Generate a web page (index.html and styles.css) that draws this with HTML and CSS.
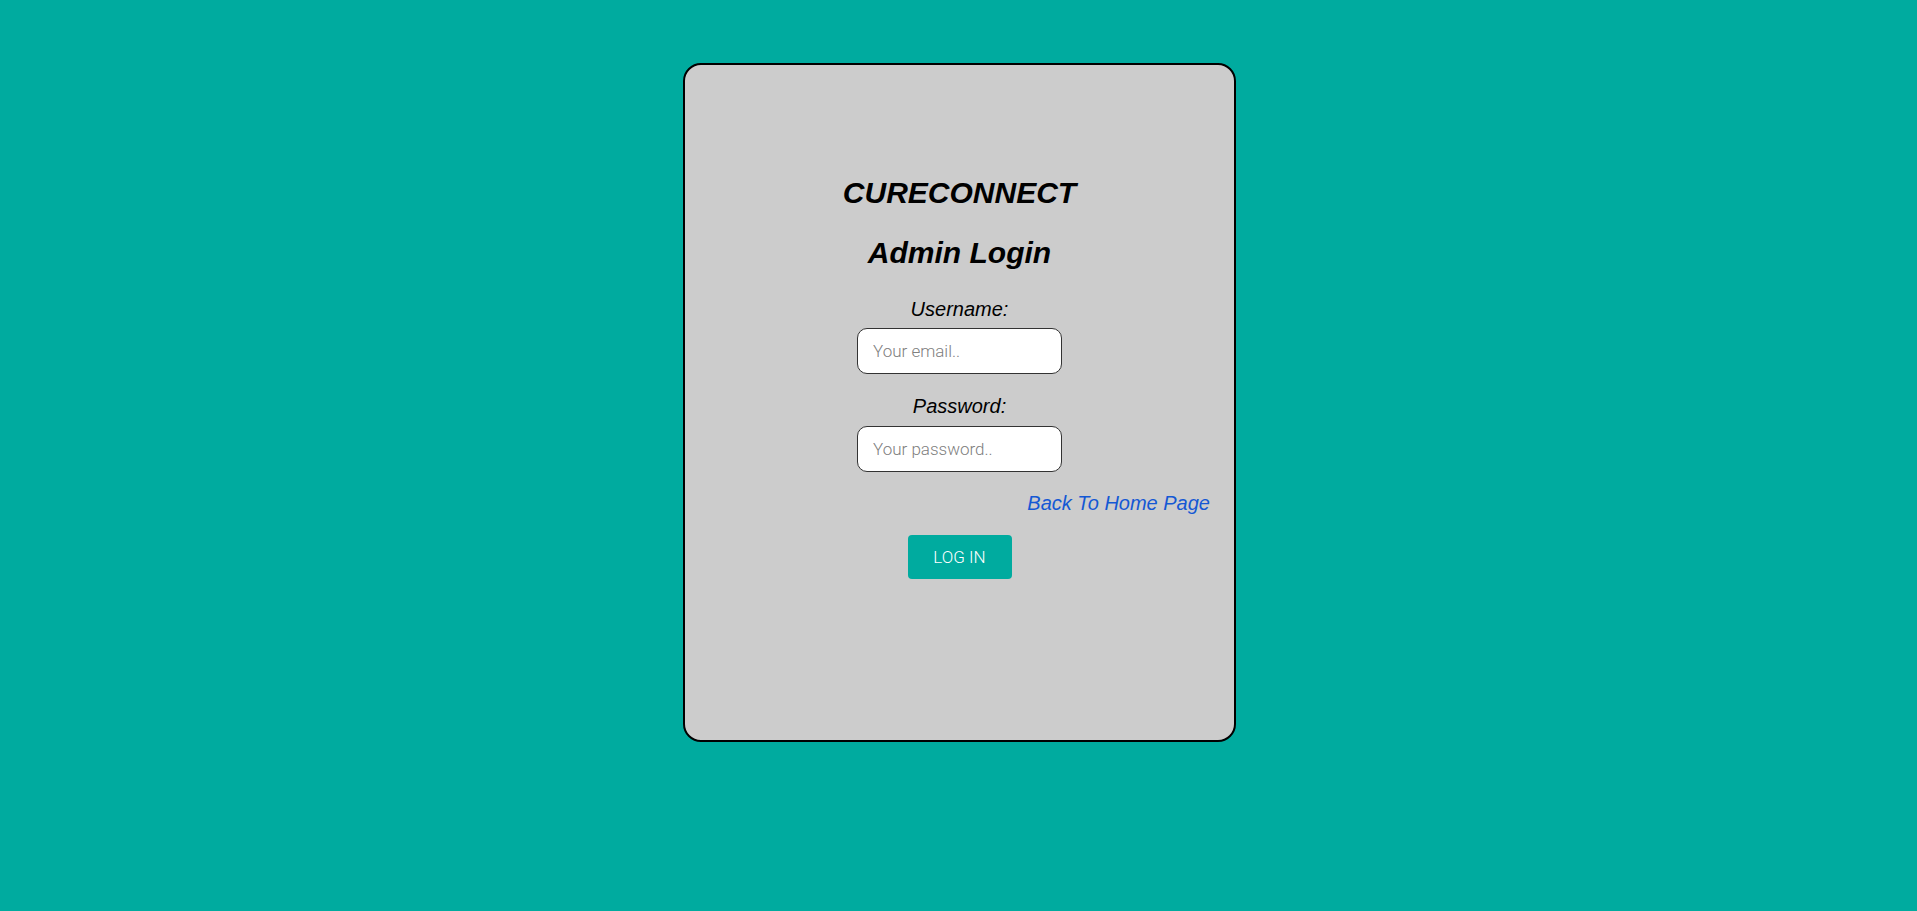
FILE: index.html
```html
<!DOCTYPE html>
<html lang="en">
<head>
<meta charset="utf-8">
<title>CureConnect Admin Login</title>
<link rel="stylesheet" href="styles.css">
</head>
<body>
  <main class="page">
    <form class="card">
      <h1 class="brand">CURECONNECT</h1>
      <h2 class="title">Admin Login</h2>
      <label class="label" for="user">Username:</label>
      <input class="field field-first" id="user" type="text" placeholder="Your email..">
      <label class="label label-second" for="pass">Password:</label>
      <input class="field field-second" id="pass" type="password" placeholder="Your password..">
      <a class="back" href="#">Back To Home Page</a>
      <button class="login" type="button">LOG IN</button>
    </form>
  </main>
</body>
</html>
```

FILE: styles.css
```css
html, body {
  margin: 0;
  padding: 0;
}

body {
  background: #00ab9f;
  min-height: 911px;
  font-family: "Liberation Sans", Arial, sans-serif;
}

.page {
  display: flex;
  justify-content: center;
  padding-top: 63px;
  padding-left: 2px;
}

.card {
  box-sizing: border-box;
  width: 553px;
  height: 679px;
  background: #cccccc;
  border: 2px solid #000;
  border-radius: 18px;
  display: flex;
  flex-direction: column;
  align-items: center;
  padding-top: 112px;
}

.brand,
.title {
  margin: 0;
  font-size: 30px;
  line-height: 32px;
  font-weight: bold;
  font-style: italic;
  color: #000;
}

.title {
  margin-top: 28px;
}

.label {
  display: block;
  font-size: 20px;
  line-height: 23px;
  font-style: italic;
  color: #000;
  margin-top: 29px;
}

.label-second {
  margin-top: 21px;
}

.field {
  box-sizing: border-box;
  width: 205px;
  height: 46px;
  margin-top: 7px;
  padding: 0 15px;
  border: 1px solid #333;
  border-radius: 10px;
  background: #fff;
  font-family: Roboto, "Liberation Sans", sans-serif;
  font-weight: 300;
  font-size: 17px;
  color: #333;
  outline: none;
}

.field-second {
  margin-top: 8px;
}

.field::placeholder {
  color: #808080;
}

.back {
  align-self: flex-end;
  margin-right: 24px;
  margin-top: 20px;
  font-size: 20px;
  line-height: 23px;
  font-style: italic;
  color: #1458d4;
  text-decoration: none;
}

.login {
  margin-top: 20px;
  width: 104px;
  height: 44px;
  border: none;
  border-radius: 4px;
  background: #00ab9f;
  color: #fff;
  font-family: Roboto, "Liberation Sans", sans-serif;
  font-weight: 300;
  font-size: 17px;
  cursor: pointer;
}
```
